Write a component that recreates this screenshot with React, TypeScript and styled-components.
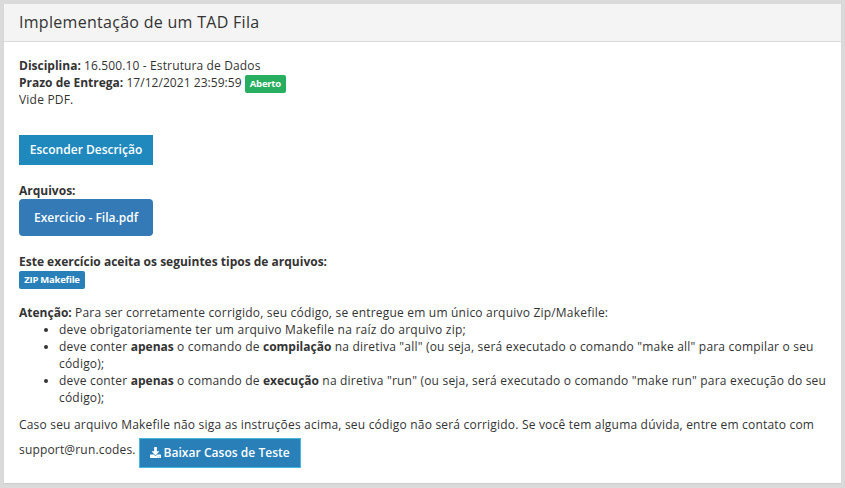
import React from "react";
import styled, { createGlobalStyle, css } from "styled-components";
import { FaDownload } from "react-icons/fa";

const GlobalStyle = createGlobalStyle`
  * { box-sizing: border-box; }
  body {
    margin: 0;
    background: #dadada;
    color: #333;
    font: 12px/17px "Open Sans", sans-serif;
  }
  b { letter-spacing: 0; }
`;

const Page = styled.main`
  height: 488px;
  padding: 4px 4px 5px;
`;

const Panel = styled.section`
  width: 837px;
  height: 479px;
  background: #fff;
  box-shadow: 0 1px 1px rgba(0, 0, 0, 0.05);
`;

const PanelHeader = styled.header`
  height: 38px;
  padding: 0 15px;
  background: #f4f4f4;
  border-bottom: 1px solid #dadada;
`;

const Title = styled.h1`
  margin: 0;
  font-size: 16px;
  font-weight: 400;
  line-height: 36px;
  letter-spacing: 0.29px;
`;

const PanelBody = styled.div`
  padding: 15px 15px 0;
`;

const Block = styled.div<{ $gap: number }>`
  margin-bottom: ${(p) => p.$gap}px;
`;

const Line = styled.div<{ $spacing?: number }>`
  height: 17px;
  white-space: nowrap;
  letter-spacing: ${(p) => p.$spacing ?? 0}px;
`;

const Tag = styled.span<{ $color: string; $width: number }>`
  display: inline-block;
  width: ${(p) => p.$width}px;
  height: 18px;
  margin-top: 1px;
  border-radius: 2px;
  background: ${(p) => p.$color};
  color: #fff;
  font-size: 9.5px;
  font-weight: 700;
  line-height: 17px;
  letter-spacing: -0.24px;
  text-align: center;
  vertical-align: top;
`;

const Button = styled.button<{ $kind: "toggle" | "file" | "download" }>`
  display: flex;
  align-items: center;
  justify-content: center;
  padding: 0;
  color: #fff;
  font: 600 12px/17px "Open Sans", sans-serif;
  white-space: nowrap;
  ${(p) =>
    p.$kind === "toggle" &&
    css`
      width: 134px;
      height: 30px;
      padding-bottom: 1px;
      border: 0;
      background: #1f89be;
    `}
  ${(p) =>
    p.$kind === "file" &&
    css`
      width: 134px;
      height: 37px;
      border: 0;
      border-radius: 4px;
      background: #337ab7;
    `}
  ${(p) =>
    p.$kind === "download" &&
    css`
      width: 162px;
      height: 30px;
      gap: 3px;
      padding-bottom: 1px;
      border: 1px solid #46b8da;
      background: #2980b9;
      letter-spacing: 0.04px;
    `}
`;

const Rules = styled.ul`
  margin: 0 0 10px;
  padding-left: 40px;
  white-space: nowrap;
`;

const Rule = styled.li<{ $spacing: number }>`
  letter-spacing: ${(p) => p.$spacing}px;
`;

const ContactRow = styled.div`
  display: flex;
  align-items: center;
  gap: 3px;
  margin-top: 5px;
`;

const Email = styled.span`
  margin-top: -7px;
  letter-spacing: 0.17px;
`;

export default function App() {
  return (
    <>
      <GlobalStyle />
      <Page>
        <Panel>
          <PanelHeader>
            <Title>Implementação de um TAD Fila</Title>
          </PanelHeader>
          <PanelBody>
            <Block $gap={27}>
              <Line $spacing={0.13}><b>Disciplina:</b> 16.500.10 - Estrutura de Dados</Line>
              <Line $spacing={0.05}>
                <b>Prazo de Entrega:</b> 17/12/2021 23:59:59 <Tag $color="#27ae60" $width={41}>Aberto</Tag>
              </Line>
              <Line $spacing={0.2}>Vide PDF.</Line>
            </Block>
            <Block $gap={17}>
              <Button $kind="toggle">Esconder Descrição</Button>
            </Block>
            <Block $gap={17}>
              <Line><b>Arquivos:</b></Line>
              <Button $kind="file">Exercicio - Fila.pdf</Button>
            </Block>
            <Block $gap={15}>
              <Line><b>Este exercício aceita os seguintes tipos de arquivos:</b></Line>
              <Tag $color="#2980b9" $width={66}>ZIP Makefile</Tag>
            </Block>
            <Line $spacing={0.205}>
              <b>Atenção:</b> Para ser corretamente corrigido, seu código, se entregue em um único arquivo Zip/Makefile:
            </Line>
            <Rules>
              <Rule $spacing={0.235}>deve obrigatoriamente ter um arquivo Makefile na raíz do arquivo zip;</Rule>
              <Rule $spacing={0.2}>
                deve conter <b>apenas</b> o comando de <b>compilação</b> na diretiva "all" (ou seja, será executado o
                comando "make all" para compilar o seu
                <br />
                código);
              </Rule>
              <Rule $spacing={0.2}>
                deve conter <b>apenas</b> o comando de <b>execução</b> na diretiva "run" (ou seja, será executado o
                comando "make run" para execução do seu
                <br />
                código);
              </Rule>
            </Rules>
            <Line $spacing={0.198}>
              Caso seu arquivo Makefile não siga as instruções acima, seu código não será corrigido. Se você tem
              alguma dúvida, entre em contato com
            </Line>
            <ContactRow>
              <Email>support@run.codes.</Email>
              <Button $kind="download">
                <FaDownload size={11} />
                Baixar Casos de Teste
              </Button>
            </ContactRow>
          </PanelBody>
        </Panel>
      </Page>
    </>
  );
}
